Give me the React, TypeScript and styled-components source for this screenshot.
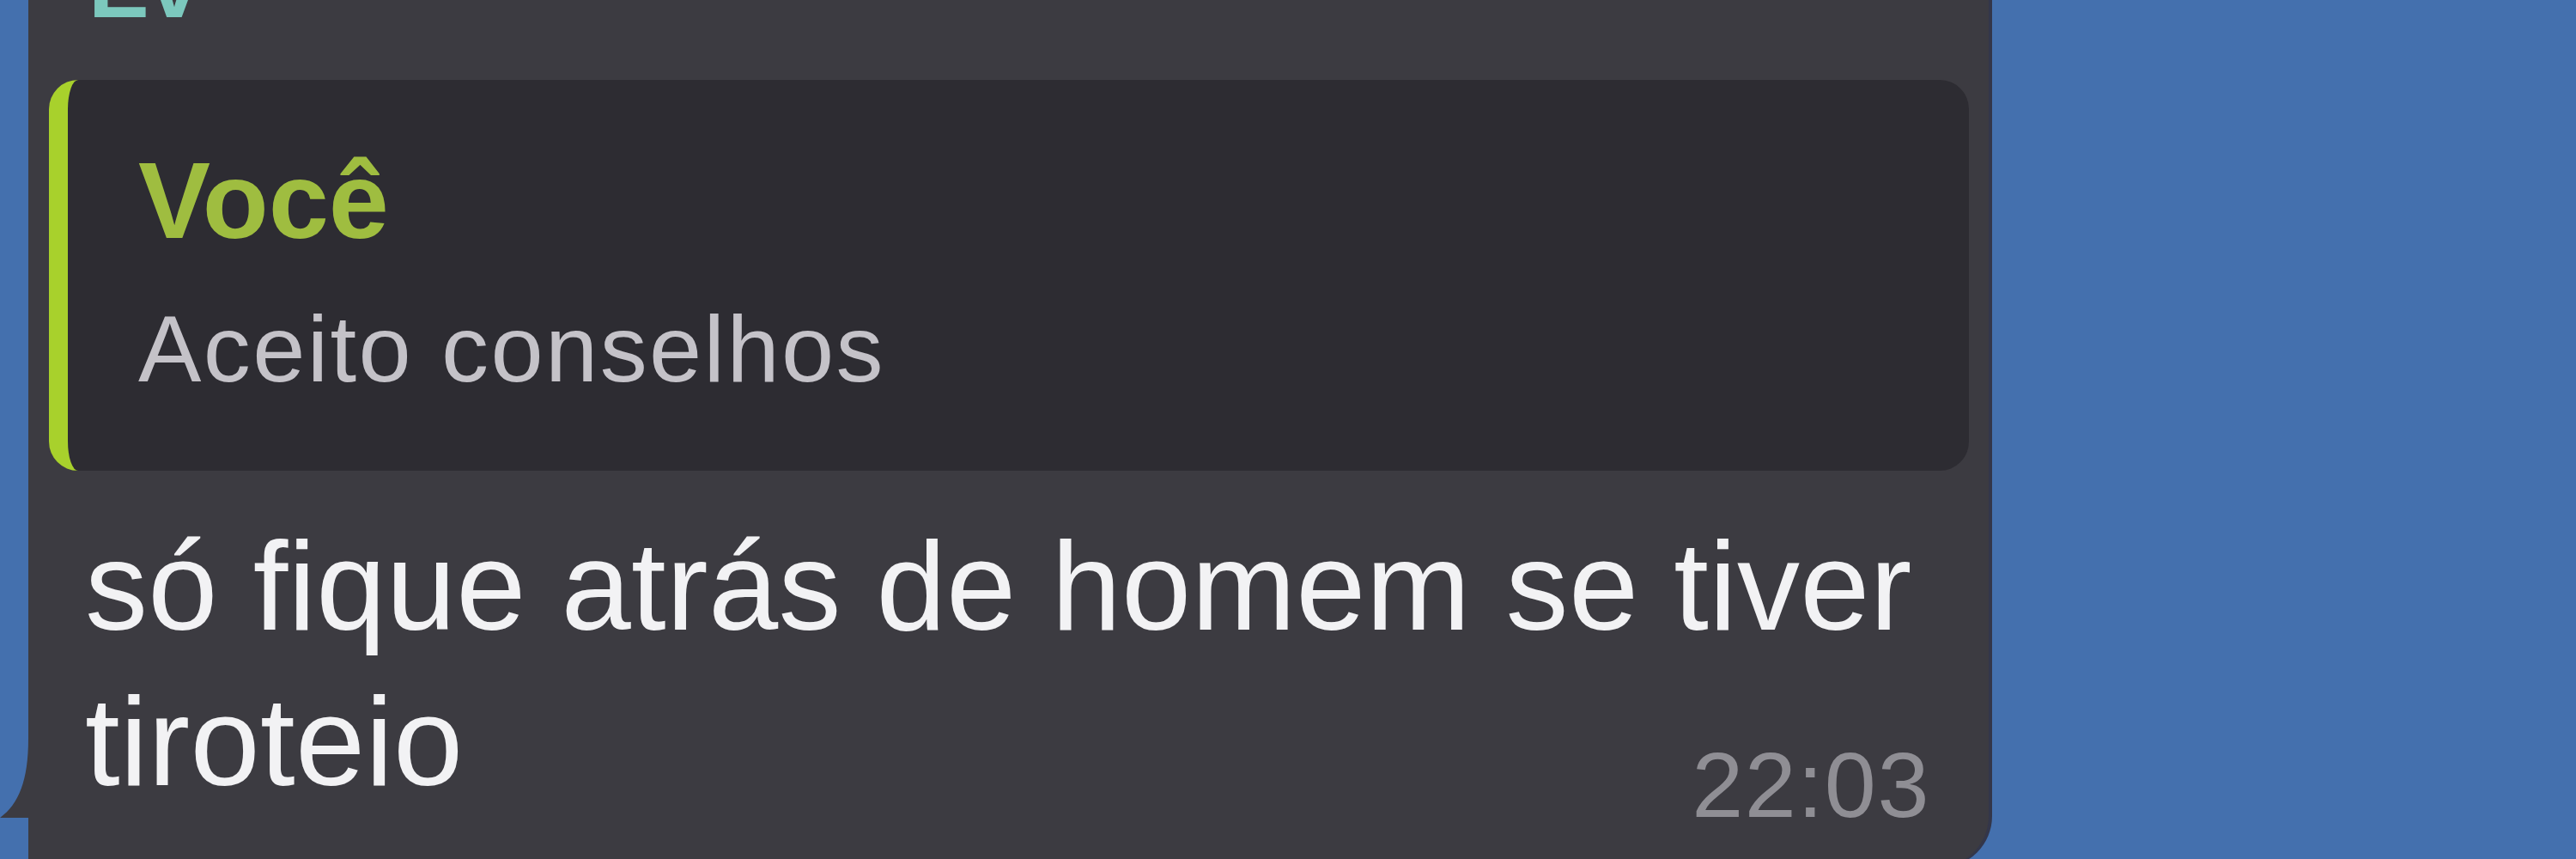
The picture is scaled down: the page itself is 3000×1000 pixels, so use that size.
import React from "react";
import styled, { createGlobalStyle } from "styled-components";

const GlobalStyle = createGlobalStyle`
  html, body {
    margin: 0;
    padding: 0;
    background: #4470ae;
  }
  body {
    font-family: "Liberation Sans", Arial, sans-serif;
  }
`;

const Stage = styled.div`
  width: 3000px;
  height: 1000px;
  overflow: hidden;
  display: flex;
  align-items: flex-start;
  background: #4470ae;
`;

const Bubble = styled.div`
  position: relative;
  box-sizing: border-box;
  width: 2283px;
  margin: -107px 0 0 33px;
  padding: 30px 23px 36px 24px;
  background: #3c3b41;
  border-radius: 60px 60px 60px 0;
  box-shadow: 4px 0 0 #33364a;
  display: flex;
  flex-direction: column;
`;

const Tail = styled.svg`
  position: absolute;
  left: -33px;
  bottom: 58px;
  width: 60px;
  height: 92px;
`;

const Sender = styled.div`
  margin-left: 46px;
  font-size: 106px;
  line-height: 120px;
  font-weight: 700;
  color: #7cc8bd;
`;

const Reply = styled.div`
  margin-top: 50px;
  padding: 74px 40px 81px 82px;
  background: #2d2c32;
  border-left: 22px solid #a8d12c;
  border-radius: 34px;
  display: flex;
  flex-direction: column;
  gap: 41px;
`;

const ReplyAuthor = styled.div`
  margin-top: -2px;
  font-size: 126px;
  line-height: 138px;
  font-weight: 700;
  color: #9fbd40;
`;

const ReplyText = styled.div`
  font-size: 110px;
  line-height: 123px;
  letter-spacing: 2.4px;
  color: #c4c2c8;
`;

const MessageText = styled.p`
  margin: 44px 0 0 42px;
  font-size: 146px;
  line-height: 181px;
  letter-spacing: 0.3px;
  color: #f2f2f4;
`;

const Footer = styled.div`
  margin-top: -101px;
  padding-right: 45px;
  display: flex;
  justify-content: flex-end;
`;

const Time = styled.span`
  font-size: 108px;
  line-height: 121px;
  letter-spacing: 1.5px;
  color: #8f8e94;
`;

export default function App() {
  return (
    <>
      <GlobalStyle />
      <Stage>
        <Bubble>
          <Tail viewBox="0 0 60 92">
            <path d="M33 0 C33 48 22 76 0 92 L60 92 L60 0 Z" fill="#3c3b41" />
          </Tail>
          <Sender>Ev</Sender>
          <Reply>
            <ReplyAuthor>Você</ReplyAuthor>
            <ReplyText>Aceito conselhos</ReplyText>
          </Reply>
          <MessageText>só fique atrás de homem se tiver tiroteio</MessageText>
          <Footer>
            <Time>22:03</Time>
          </Footer>
        </Bubble>
      </Stage>
    </>
  );
}
